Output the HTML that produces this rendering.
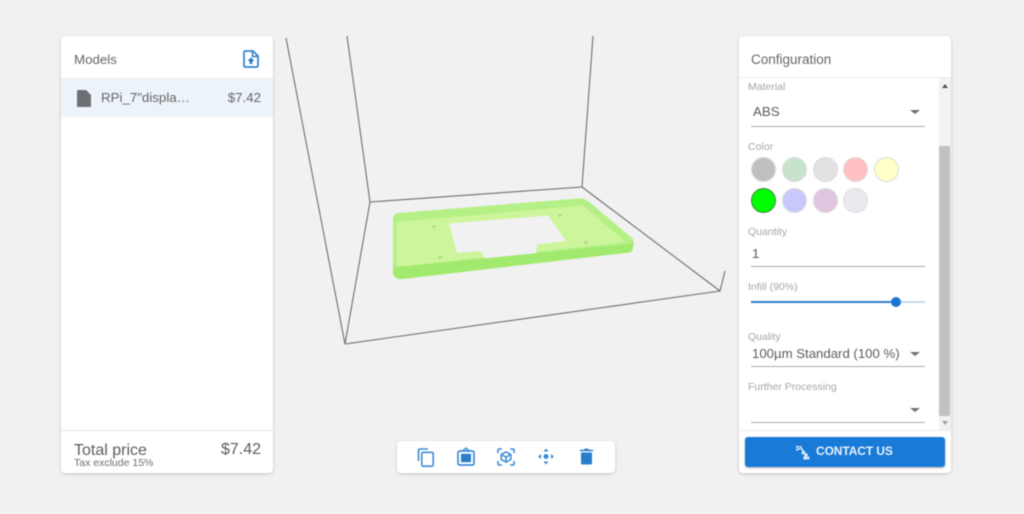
<!DOCTYPE html>
<html><head><meta charset="utf-8">
<style>
*{box-sizing:border-box}
html,body{margin:0;padding:0;width:1024px;height:514px;overflow:hidden;background:#f1f1f1;font-family:"Liberation Sans",sans-serif;color:#5f5f5f}
.t{position:absolute;white-space:nowrap;line-height:1}
.card{position:absolute;background:#fff;border-radius:4px;box-shadow:0 1px 3px rgba(0,0,0,.2)}
.lab{font-size:10.5px;color:#a6a6a6}
.ul{position:absolute;left:751px;width:174px;height:1px;background:#adadad}
.arr{position:absolute;left:910px;width:0;height:0;border-left:5px solid transparent;border-right:5px solid transparent;border-top:4.500px solid #707070}
.dot{position:absolute;width:25px;height:25px;border-radius:50%;border:1px solid #dcdcdc}
svg{position:absolute;overflow:visible}
#all{filter:blur(.5px);position:absolute;left:0;top:0;width:1024px;height:514px}
</style></head>
<body><div id="all">

<svg style="left:0;top:0" width="1024" height="514" viewBox="0 0 1024 514">
<g fill="none" stroke="#6f6f6f" stroke-width="1.100">
<path d="M286 38L345 344L370 202L347 36M370 202L582 187L593 36M582 187L720 291L725 271M720 291L345 344"/>
</g>
<path d="M393 219Q393 214 398 213L578 198.500Q584 198 588 201L632 238Q634 240 633.500 244L632.500 250Q632 252 629 252.500L402 279Q394 279.500 393 273Z" fill="#b4f086"/>
<path d="M396.500 222L583 205.500L626 242L396.500 267Z" fill="#cdf59b"/>
<path d="M449 223.500L548 215.500L566 241L537 244.500L536 254L485 259L481 251L457 253Z" fill="#f1f1f1"/>
<path d="M393 265L398 267L628 244L633.500 242L632.500 250Q632 252 629 252.500L402 279Q394 279.500 393 273Z" fill="#a1ea6d"/>
<g fill="#a5d27c"><ellipse cx="434" cy="226.500" rx="1.600" ry="1"/><ellipse cx="440" cy="257.500" rx="1.800" ry="1.100"/><ellipse cx="560" cy="215.500" rx="1.600" ry="1"/><ellipse cx="586" cy="242.500" rx="1.800" ry="1.100"/></g>
</svg>

<!-- Models -->
<div class="card" style="left:61px;top:36px;width:212px;height:437px"></div>
<div class="t" style="left:74px;top:53px;font-size:13.300px;color:#666">Models</div>
<svg style="left:243px;top:50px" width="16" height="18" viewBox="0 0 16 18"><path d="M2.500 1H10L15 6V15.500Q15 17 13.500 17H2.500Q1 17 1 15.500V2.500Q1 1 2.500 1Z" fill="none" stroke="#2f83d0" stroke-width="1.700"/><path d="M9.500 1V6.500H15" fill="none" stroke="#2f83d0" stroke-width="1.500"/><path d="M8 7.500L11.500 11H9.300V14H6.700V11H4.500Z" fill="#2277cc"/></svg>
<div style="position:absolute;left:61px;top:78px;width:212px;height:1px;background:#ececec"></div>
<div style="position:absolute;left:61px;top:79px;width:212px;height:38px;background:#edf3fa"></div>
<svg style="left:77px;top:90px" width="14" height="17" viewBox="0 0 14 17"><path d="M1.500 0H9L14 5V15.500Q14 17 12.500 17H1.500Q0 17 0 15.500V1.500Q0 0 1.500 0Z" fill="#6d6f73"/></svg>
<div class="t" style="left:101px;top:91px;font-size:13.300px;color:#666">RPi_7"displa…</div>
<div class="t" style="right:763px;top:91px;font-size:13.300px;color:#666">$7.42</div>
<div style="position:absolute;left:61px;top:430px;width:212px;height:1px;background:#e9e9e9"></div>
<div class="t" style="left:74px;top:443px;font-size:16px;color:#5c5c5c">Total price</div>
<div class="t" style="left:74px;top:458px;font-size:10.500px;color:#6e6e6e">Tax exclude 15%</div>
<div class="t" style="right:763px;top:442px;font-size:16px;color:#5c5c5c">$7.42</div>

<!-- Toolbar -->
<div class="card" style="left:397px;top:441px;width:218px;height:32px"></div>
<svg style="left:417px;top:448px" width="18" height="19" viewBox="0 0 18 19"><path d="M1.500 13V2.200Q1.500 1 2.700 1H11" fill="none" stroke="#3f8bd2" stroke-width="1.600"/><rect x="4.800" y="4.300" width="11.400" height="13.900" rx="1.300" fill="none" stroke="#3f8bd2" stroke-width="1.600"/></svg>
<svg style="left:457px;top:447px" width="18" height="19" viewBox="0 0 18 19"><path d="M5.500 4L9 1L12.500 4" fill="none" stroke="#3f8bd2" stroke-width="1.400"/><rect x="1" y="4" width="16" height="14" rx="1.800" fill="none" stroke="#3f8bd2" stroke-width="1.700"/><rect x="4" y="6.800" width="10" height="8.400" fill="#2a7ccb"/></svg>
<svg style="left:497px;top:448px" width="18" height="18" viewBox="0 0 18 18"><path d="M1 5V2.200Q1 1 2.200 1H5M13 1H15.800Q17 1 17 2.200V5M17 13V15.800Q17 17 15.800 17H13M5 17H2.200Q1 17 1 15.800V13" fill="none" stroke="#3f8bd2" stroke-width="1.600"/><path d="M9 3.800L13.800 6.500V11.500L9 14.200L4.200 11.500V6.500ZM4.200 6.500L9 9.200L13.800 6.500M9 9.200V14.200" fill="none" stroke="#3f8bd2" stroke-width="1.500"/></svg>
<svg style="left:538px;top:448px" width="16" height="17" viewBox="0 0 16 17"><g fill="#3f8bd2"><circle cx="8" cy="8.500" r="2.500"/><path d="M8 .5L10.500 3.500H5.500ZM8 16.500L10.500 13.500H5.500ZM0 8.500L3 6V11ZM16 8.500L13 6V11Z"/></g></svg>
<svg style="left:580px;top:448px" width="13" height="17" viewBox="0 0 13 17"><path d="M1 4.500H12V15Q12 16.500 10.500 16.500H2.500Q1 16.500 1 15Z" fill="#2a7ccb"/><path d="M0 1.800H4L4.800.6H8.200L9 1.800H13V3.300H0Z" fill="#2a7ccb"/></svg>

<!-- Configuration -->
<div class="card" style="left:739px;top:36px;width:212px;height:437px"></div>
<div class="t" style="left:751px;top:53px;font-size:13.500px;color:#666">Configuration</div>
<div style="position:absolute;left:739px;top:77px;width:212px;height:1px;background:#ececec"></div>
<div style="position:absolute;left:939px;top:78px;width:12px;height:352px;background:#f2f2f2"></div>
<div style="position:absolute;left:939px;top:146px;width:11px;height:270px;background:#c1c1c1"></div>
<div style="position:absolute;left:942px;top:84px;width:0;height:0;border-left:3px solid transparent;border-right:3px solid transparent;border-bottom:4px solid #505050"></div>
<div style="position:absolute;left:942px;top:421px;width:0;height:0;border-left:3px solid transparent;border-right:3px solid transparent;border-top:4px solid #a3a3a3"></div>

<div class="t lab" style="left:748px;top:82px">Material</div>
<div class="t" style="left:753px;top:105px;font-size:13.300px;color:#5c5c5c">ABS</div>
<div class="arr" style="top:110px"></div>
<div class="ul" style="top:126px"></div>

<div class="t lab" style="left:748px;top:142px">Color</div>
<div class="dot" style="left:751px;top:157px;background:#c0c0c0"></div>
<div class="dot" style="left:782px;top:157px;background:#c8e3cb"></div>
<div class="dot" style="left:813px;top:157px;background:#e2e2e2"></div>
<div class="dot" style="left:843px;top:157px;background:#ffc0c4"></div>
<div class="dot" style="left:874px;top:157px;background:#ffffc8"></div>
<div class="dot" style="left:751px;top:188px;background:#00ff00;border:1px solid #3b8a3b"></div>
<div class="dot" style="left:782px;top:188px;background:#c8c8fb"></div>
<div class="dot" style="left:813px;top:188px;background:#e0c5e0"></div>
<div class="dot" style="left:843px;top:188px;background:#ece8f0"></div>

<div class="t lab" style="left:748px;top:227px">Quantity</div>
<div class="t" style="left:752px;top:247px;font-size:13.300px;color:#5c5c5c">1</div>
<div class="ul" style="top:266px"></div>

<div class="t lab" style="left:748px;top:282px">Infill (90%)</div>
<div style="position:absolute;left:751px;top:301px;width:174px;height:2px;background:#c3daf0"></div>
<div style="position:absolute;left:751px;top:301px;width:145px;height:2px;background:#2e80cd"></div>
<div style="position:absolute;left:891px;top:297px;width:10px;height:10px;border-radius:50%;background:#1a76d2"></div>

<div class="t lab" style="left:748px;top:332px">Quality</div>
<div class="t" style="left:752px;top:347px;font-size:13.200px;color:#5c5c5c">100µm Standard (100 %)</div>
<div class="arr" style="top:352px"></div>
<div class="ul" style="top:366px"></div>

<div class="t lab" style="left:748px;top:382px">Further Processing</div>
<div class="arr" style="top:408px"></div>
<div class="ul" style="top:422px"></div>

<div style="position:absolute;left:739px;top:430px;width:212px;height:1px;background:#ececec"></div>
<div style="position:absolute;left:745px;top:437px;width:200px;height:30px;background:#1a7ad8;border-radius:3px;box-shadow:0 1px 2px rgba(0,0,0,.3)"></div>
<svg style="left:795px;top:445px" width="15" height="15" viewBox="0 0 15 15"><g fill="none" stroke="#e4effa" stroke-width="1.500"><path d="M1 2L4 1.500M1 5L5 3.500M5 1L7 4.500L10 8"/></g><g fill="#e4effa"><circle cx="8" cy="8" r="1.500"/><circle cx="11" cy="10" r="1.700"/><circle cx="10" cy="13" r="1.700"/><circle cx="13" cy="13" r="1.500"/></g></svg>
<div class="t" style="left:816px;top:445px;font-size:12px;font-weight:bold;color:#e8f2fc;letter-spacing:-.1px">CONTACT US</div>

</div></body></html>
